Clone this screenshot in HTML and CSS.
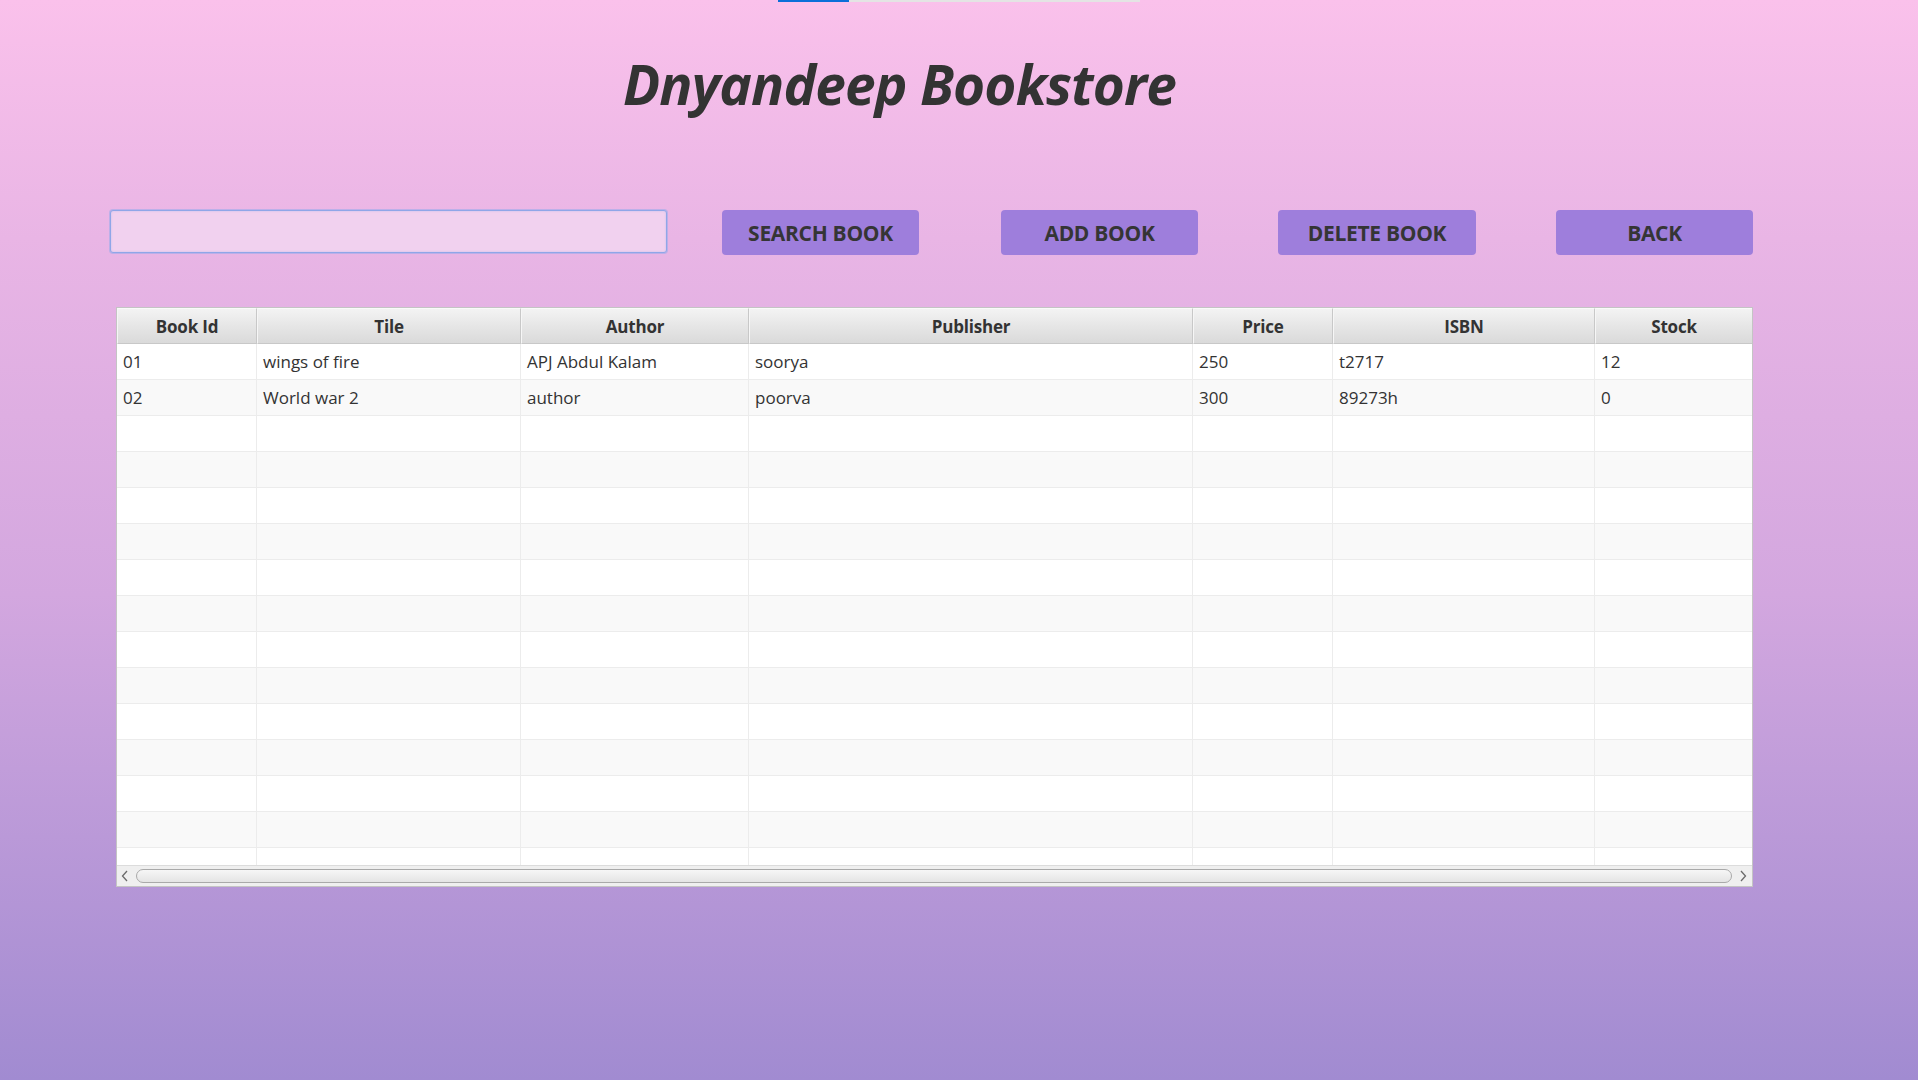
FILE: index.html
```html
<!DOCTYPE html>
<html>
<head>
<meta charset="utf-8">
<title>Dnyandeep Bookstore</title>
<link rel="stylesheet" href="styles.css">
</head>
<body>
<div class="topbar"><div class="topbar-fill"></div></div>
<h1 class="title">Dnyandeep Bookstore</h1>
<div class="toolbar">
  <input class="search" type="text">
  <button class="btn btn-search">SEARCH BOOK</button>
  <button class="btn btn-add">ADD BOOK</button>
  <button class="btn btn-delete">DELETE BOOK</button>
  <button class="btn btn-back">BACK</button>
</div>
<div class="table">
  <div class="thead">
    <div class="th">Book Id</div>
    <div class="th">Tile</div>
    <div class="th">Author</div>
    <div class="th">Publisher</div>
    <div class="th">Price</div>
    <div class="th">ISBN</div>
    <div class="th">Stock</div>
  </div>
  <div class="tbody">
    <div class="tr"><div class="td">01</div><div class="td">wings of fire</div><div class="td">APJ Abdul Kalam</div><div class="td">soorya</div><div class="td">250</div><div class="td">t2717</div><div class="td">12</div></div>
    <div class="tr"><div class="td">02</div><div class="td">World war 2</div><div class="td">author</div><div class="td">poorva</div><div class="td">300</div><div class="td">89273h</div><div class="td">0</div></div>
    <div class="tr"><div class="td"></div><div class="td"></div><div class="td"></div><div class="td"></div><div class="td"></div><div class="td"></div><div class="td"></div></div>
    <div class="tr"><div class="td"></div><div class="td"></div><div class="td"></div><div class="td"></div><div class="td"></div><div class="td"></div><div class="td"></div></div>
    <div class="tr"><div class="td"></div><div class="td"></div><div class="td"></div><div class="td"></div><div class="td"></div><div class="td"></div><div class="td"></div></div>
    <div class="tr"><div class="td"></div><div class="td"></div><div class="td"></div><div class="td"></div><div class="td"></div><div class="td"></div><div class="td"></div></div>
    <div class="tr"><div class="td"></div><div class="td"></div><div class="td"></div><div class="td"></div><div class="td"></div><div class="td"></div><div class="td"></div></div>
    <div class="tr"><div class="td"></div><div class="td"></div><div class="td"></div><div class="td"></div><div class="td"></div><div class="td"></div><div class="td"></div></div>
    <div class="tr"><div class="td"></div><div class="td"></div><div class="td"></div><div class="td"></div><div class="td"></div><div class="td"></div><div class="td"></div></div>
    <div class="tr"><div class="td"></div><div class="td"></div><div class="td"></div><div class="td"></div><div class="td"></div><div class="td"></div><div class="td"></div></div>
    <div class="tr"><div class="td"></div><div class="td"></div><div class="td"></div><div class="td"></div><div class="td"></div><div class="td"></div><div class="td"></div></div>
    <div class="tr"><div class="td"></div><div class="td"></div><div class="td"></div><div class="td"></div><div class="td"></div><div class="td"></div><div class="td"></div></div>
    <div class="tr"><div class="td"></div><div class="td"></div><div class="td"></div><div class="td"></div><div class="td"></div><div class="td"></div><div class="td"></div></div>
    <div class="tr"><div class="td"></div><div class="td"></div><div class="td"></div><div class="td"></div><div class="td"></div><div class="td"></div><div class="td"></div></div>
    <div class="tr"><div class="td"></div><div class="td"></div><div class="td"></div><div class="td"></div><div class="td"></div><div class="td"></div><div class="td"></div></div>
  </div>
  <div class="hscroll">
    <svg class="arrow" width="10" height="12" viewBox="0 0 10 12"><path d="M7 1 L2.5 6 L7 11" fill="none" stroke="#6a6a6a" stroke-width="1.3"/></svg>
    <div class="thumb"></div>
    <svg class="arrow" width="10" height="12" viewBox="0 0 10 12"><path d="M3 1 L7.5 6 L3 11" fill="none" stroke="#6a6a6a" stroke-width="1.3"/></svg>
  </div>
</div>
</body>
</html>
```
FILE: styles.css
```css
html, body {
  margin: 0;
  padding: 0;
}
body {
  width: 1918px;
  height: 1080px;
  overflow: hidden;
  background: linear-gradient(to bottom, #fac1eb 0%, #e9b5e5 22%, #d3a7df 55%, #a18bd1 100%);
  font-family: "Open Sans", "Noto Sans", sans-serif;
  color: #333333;
}
.topbar {
  width: 362px;
  height: 2px;
  margin: 0 auto;
  background: #e4e4e4;
}
.topbar-fill {
  width: 71px;
  height: 2px;
  background: #0b6fd9;
}
.title {
  margin: 54px 0 0 623px;
  font-size: 55px;
  line-height: 55px;
  font-weight: 700;
  font-style: italic;
  color: #333333;
  letter-spacing: -0.9px;
}
.toolbar {
  display: flex;
  align-items: flex-start;
  margin: 99px 0 0 110px;
  height: 45px;
}
.search {
  box-sizing: border-box;
  width: 557px;
  height: 43px;
  margin: 0 55px 0 0;
  padding: 0 8px;
  border: 1px solid #8fa6e8;
  border-radius: 3px;
  background: #f1d1ef;
  box-shadow: 0 0 0 1px rgba(150, 172, 235, 0.55), inset 0 0 2px rgba(150, 172, 235, 0.5);
  outline: none;
}
.btn {
  box-sizing: border-box;
  width: 197px;
  height: 45px;
  padding: 0;
  border: none;
  border-radius: 4px;
  background: #9e7edc;
  color: #353535;
  font-family: "Open Sans", "Noto Sans", sans-serif;
  font-weight: 700;
  font-size: 21px;
  letter-spacing: -0.3px;
}
.btn-add { margin-left: 82px; }
.btn-delete { margin-left: 80px; width: 198px; }
.btn-back { margin-left: 80px; }

.table {
  box-sizing: border-box;
  width: 1637px;
  height: 580px;
  margin: 52px 0 0 116px;
  border: 1px solid #c4c4c4;
  background: #ffffff;
  display: flex;
  flex-direction: column;
  overflow: hidden;
}
.thead, .tr {
  display: grid;
  grid-template-columns: 140px 264px 228px 444px 140px 262px 157px;
}
.thead {
  height: 36px;
  flex: none;
}
.th {
  box-sizing: border-box;
  height: 36px;
  border-left: 1px solid #f6f6f6;
  border-right: 1px solid #c8c8c8;
  border-top: 1px solid #fafafa;
  border-bottom: 1px solid #c8c8c8;
  background: linear-gradient(to bottom, #f3f3f3 0%, #e6e6e6 50%, #dadada 100%);
  display: flex;
  align-items: center;
  justify-content: center;
  font-weight: 700;
  font-size: 17px;
  color: #333333;
  letter-spacing: -0.2px;
}
.th:last-child { border-right: none; }
.tbody {
  flex: 1;
  overflow: hidden;
}
.tr {
  height: 36px;
  background: #ffffff;
}
.tr:nth-child(even) { background: #f9f9f9; }
.td {
  box-sizing: border-box;
  height: 36px;
  border-right: 1px solid #ececec;
  border-bottom: 1px solid #ececec;
  padding: 0 6px;
  display: flex;
  align-items: center;
  font-size: 17px;
  color: #333333;
}
.td:last-child { border-right: none; }
.hscroll {
  flex: none;
  height: 21px;
  box-sizing: border-box;
  border-top: 1px solid #dcdcdc;
  background: #efefef;
  display: flex;
  align-items: center;
  padding: 0 4px 0 3px;
}
.arrow { flex: none; }
.thumb {
  flex: 1;
  height: 14px;
  margin: 0 6px 0 6px;
  box-sizing: border-box;
  border: 1px solid #a9a9a9;
  border-radius: 7px;
  background: linear-gradient(to bottom, #f6f6f6 0%, #e4e4e4 100%);
}
```
